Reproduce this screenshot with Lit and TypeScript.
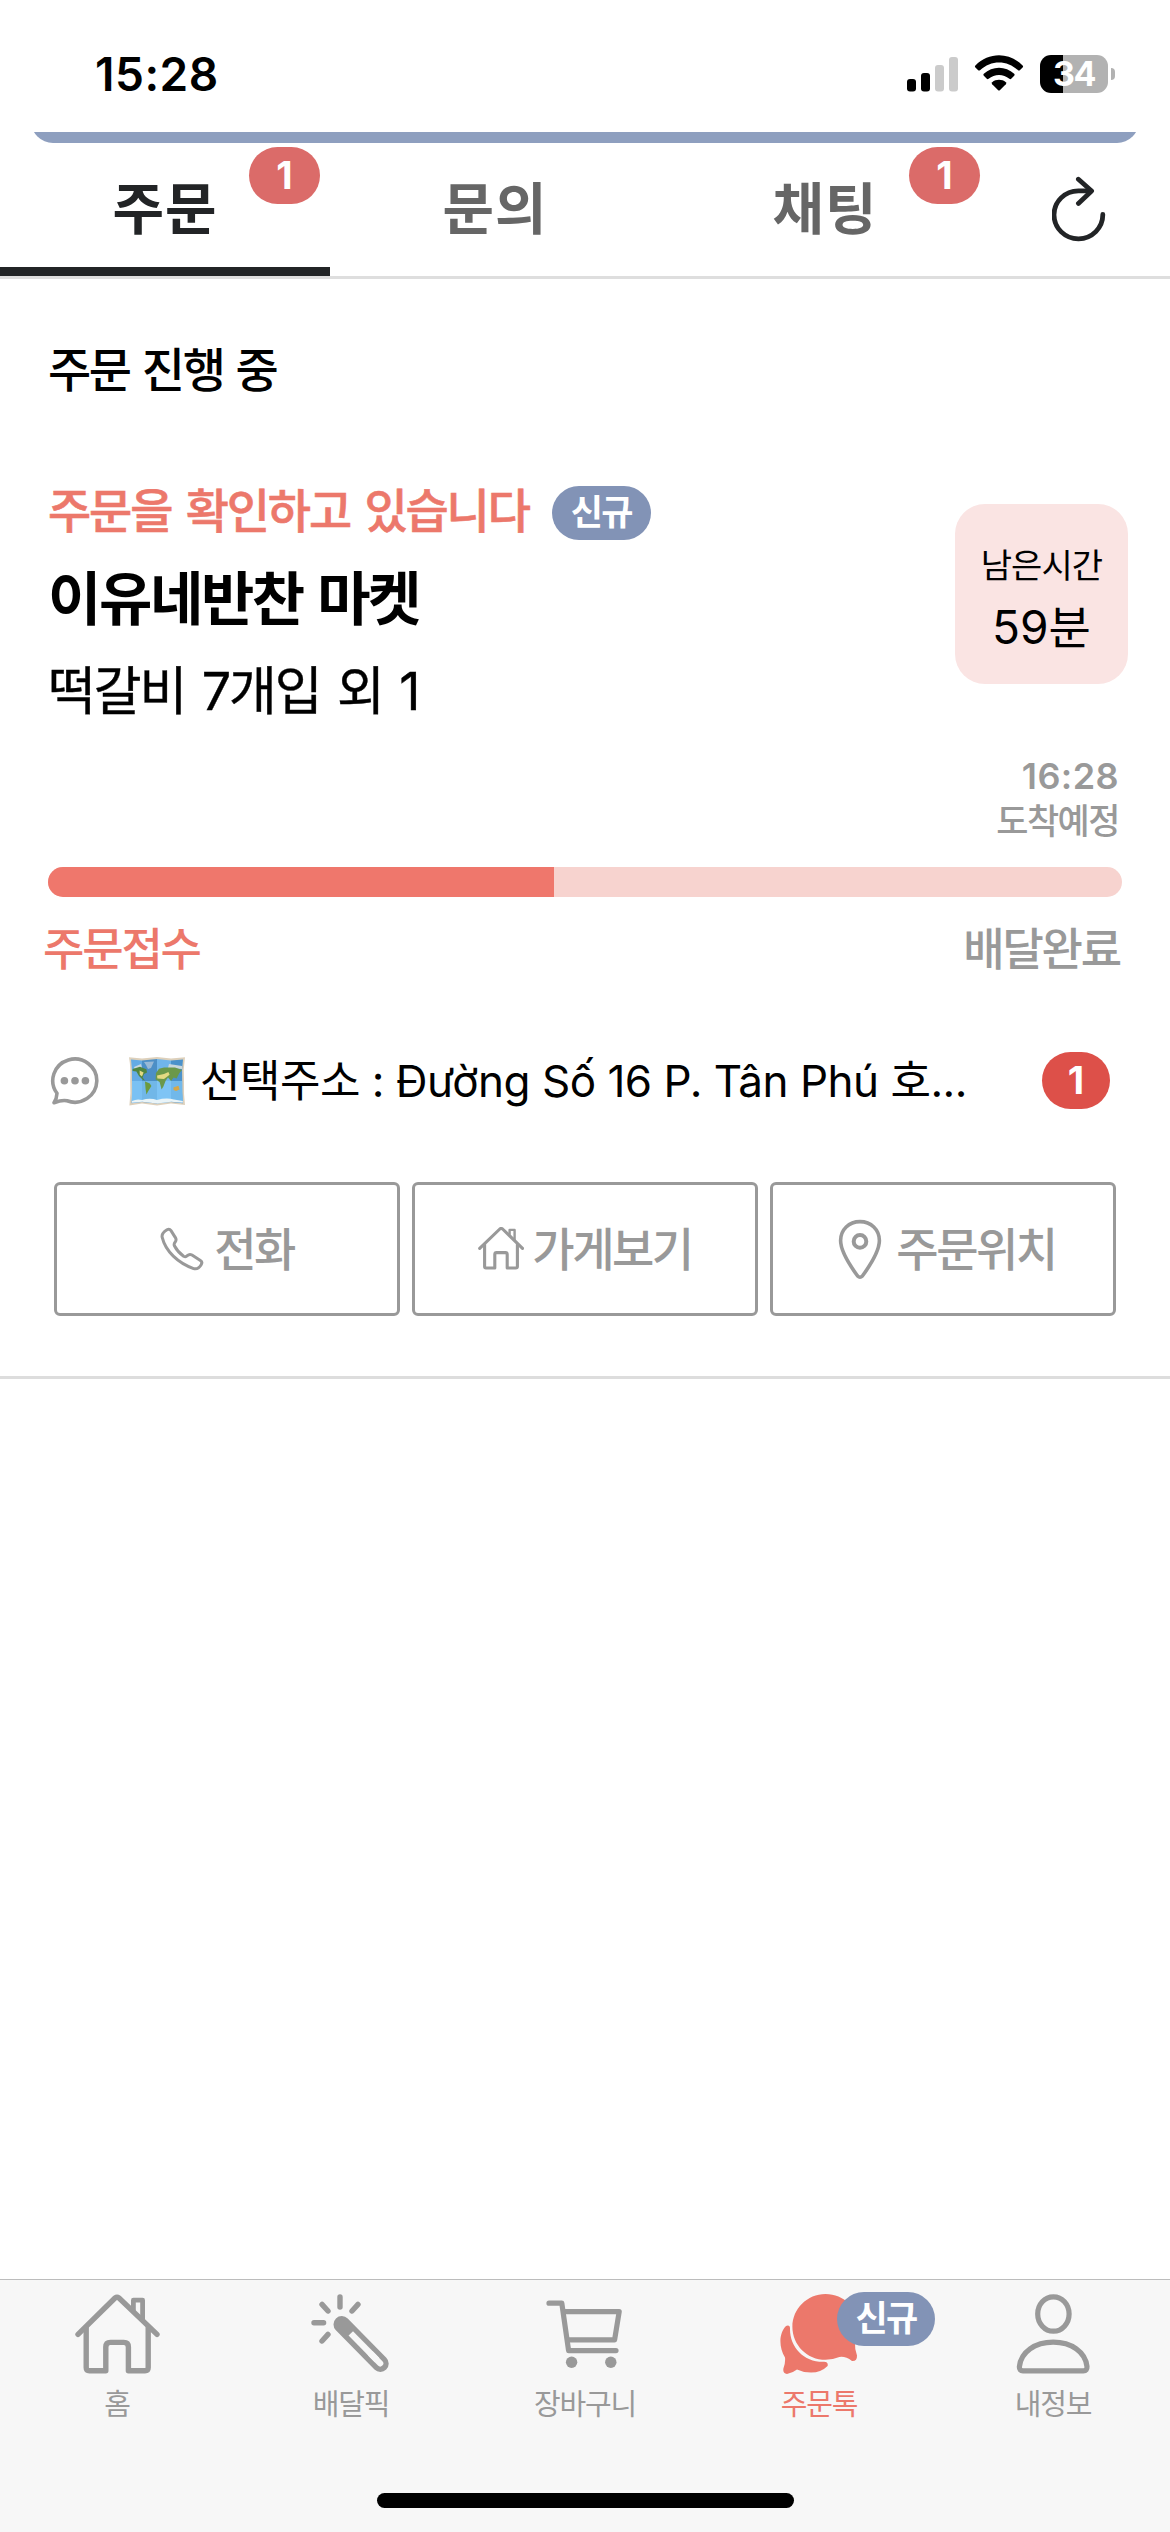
import { LitElement, html, css, svg, nothing } from "lit";
import { customElement, property } from "lit/decorators.js";
import { classMap } from "lit/directives/class-map.js";

const icons: Record<string, { w: number; h: number; body: unknown }> = {
  refresh: {
    w: 54, h: 66,
    body: svg`<g fill="none" stroke="currentColor" stroke-width="4.8" stroke-linecap="round" stroke-linejoin="round">
      <path d="M50.8 38.5 A24.4 24 0 1 1 26.4 14.8 H39"/><path d="M26.4 3.2 L39.6 15 L26.4 27.4"/></g>`,
  },
  chat: {
    w: 50, h: 50,
    body: svg`<path fill="none" stroke="currentColor" stroke-width="3.6" stroke-linejoin="round"
        d="M7 37.3 A22 21.6 0 1 1 17 44.8 Q12.5 43.6 4 46.7 Q6.8 42.5 7 37.3 Z"/>
      <g fill="currentColor"><circle cx="14.4" cy="24.8" r="3.8"/><circle cx="25" cy="24.8" r="3.8"/><circle cx="35.4" cy="24.8" r="3.8"/></g>`,
  },
  map: {
    w: 57, h: 50,
    body: svg`<path fill="#ddd0bb" d="M1 1.2 L14 2.6 L29 1 L43 2.6 L57 1.2 Q55 13 56 25 Q55.6 38 57 49 L43 47.6 L29 49.6 L14 47.6 L1.4 49.4 Q3 37 2.2 25 Q3 12 1 1.2 Z"/>
      <path fill="#64abe4" d="M3 3.4 L14 4.6 V46 L3.6 47.2 Q4.6 36 4 25 Q4.4 13 3 3.4 Z"/>
      <path fill="#4c8fc6" d="M14 4.6 L29 3 V47.6 L14 46 Z"/>
      <path fill="#70b5ea" d="M29 3 L43 4.6 V46 L29 47.6 Z"/>
      <path fill="#4b92cb" d="M43 4.6 L55 3.4 Q53.6 13 54.2 25 Q54 36 55 47.2 L43 46 Z"/>
      <path fill="#86cdfa" opacity=".65" d="M4 25 H54.2 Q54 36 55 46 L43 45 L29 46.6 L14 45 L3.7 46 Z"/>
      <path fill="#98b9d6" d="M16 6 L26 5.4 L23 12 L20 13 L18 9 Z"/>
      <path fill="#c9d7dc" d="M6 11 L13 8 L14 12 L7 14 Z M41 8 L54 10 V13 L40 12 Z"/>
      <path fill="#50853f" d="M4.6 13 L12 10.8 L18.4 13.2 L19 16.4 L16 18 L14.6 21.6 L17 24.6 L15 24 L11 20 L8.4 15.6 L4.6 15 Z"/>
      <path fill="#6c9a3d" d="M17 25.4 L21.8 27.4 L23.4 30 L20 35.6 L18.4 38.4 L17.6 33 Z"/>
      <path fill="#6b984a" d="M28 17 L31 12.8 L36 11.6 L47 11.4 L54 14 L51.4 17 L48.6 22.4 L45.6 21.4 L43 25 L40 21.4 L37.6 24.8 L35.4 30.6 L33.6 33.6 L31.6 26 L27.6 23.4 Z"/>
      <path fill="#e3d982" d="M11.6 14.6 L15.6 16.6 L14 20.6 L11.8 18.8 Z M29 19.6 L36 18 L40.4 16 L41.6 18.8 L36 23 L29.4 22.6 Z"/>
      <path fill="#d6a748" d="M45.4 31.6 L50.4 29.8 L51.6 33.4 L48 35 L45.6 34 Z"/>
      <path fill="#e9f4f8" d="M4 45 Q9 42.4 14 44 Q22 41.6 29 44 Q38 41.4 46 43.4 L54.8 45 L54.8 46.8 L43 45.8 L29 47.4 L14 45.8 L4 46.8 Z"/>`,
  },
  phone: {
    w: 44, h: 44,
    body: svg`<path fill="none" stroke="currentColor" stroke-width="3" stroke-linejoin="round"
      d="M7 2.8 Q9.4 1.4 11 3.6 L15.4 10.6 Q16.8 13 15.2 15 Q13.6 17 14.4 18.8 Q17.6 25 23.6 29.2 Q25.8 30.4 27.4 28.6 Q29.4 26.6 32 28 L40.4 33.4 Q42.8 35 41.2 37.6 Q38.6 42.6 33.6 41.6 C18 36 5.6 24.4 2.2 10.4 Q1.2 6.4 7 2.8 Z"/>`,
  },
  shop: {
    w: 46, h: 44,
    body: svg`<g fill="none" stroke="currentColor" stroke-width="3.1" stroke-linecap="round" stroke-linejoin="round">
      <path d="M1.7 21.4 L21.8 2 Q23.2 1 24.6 2 L44.5 21.4"/>
      <path d="M6.6 17.6 V39.6 Q6.6 41 8 41 H16.8 V27.4 Q16.8 25.6 18.6 25.6 H27.4 Q29.2 25.6 29.2 27.4 V41 H37.6 Q39.4 41 39.4 39.6 V17.6"/>
      <path stroke-width="2.4" d="M31.6 7 V2.9 H36.6 V12.4"/></g>`,
  },
  pin: {
    w: 44, h: 60,
    body: svg`<g fill="none" stroke="currentColor" stroke-linejoin="round">
      <path stroke-width="3.6" d="M22 2.6 C33 2.6 41.4 10.6 41.4 21.6 C41.4 33 31 48 24.4 57 Q22 59.4 19.6 57 C13 48 2.6 33 2.6 21.6 C2.6 10.6 11 2.6 22 2.6 Z"/>
      <circle stroke-width="4" cx="22" cy="22.4" r="6.3"/></g>`,
  },
  home: {
    w: 87, h: 82,
    body: svg`<g fill="none" stroke="currentColor" stroke-width="5.4" stroke-linecap="round" stroke-linejoin="round">
      <path d="M4 41.4 L41 5 Q43 3.6 45 5 L83 41.4"/>
      <path d="M12.2 35 V74.6 Q12.2 77.8 15.4 77.8 H31.8 V54 Q31.8 49.4 36.4 49.4 H49.8 Q54.4 49.4 54.4 54 V77.8 H71 Q74.2 77.8 74.2 74.6 V35"/>
      <path stroke-width="4.8" d="M59.4 17 V7.2 H68.6 V27"/></g>`,
  },
  wand: {
    w: 80, h: 82,
    body: svg`<g fill="none" stroke="currentColor" stroke-linecap="round">
      <path stroke-width="5.4" d="M29 4 V14 M11 11.4 L17 18 M47 11.4 L41 18 M3 29.7 H12.6 M17 41.4 L11 48"/>
      <path stroke-width="16.6" d="M30.8 31.4 L69.4 70.6"/></g>
      <path fill="none" stroke="#f7f7f7" stroke-width="6.2" d="M39.8 40.4 L66 67"/>
      <path fill="none" stroke="#f7f7f7" stroke-width="6.2" stroke-linecap="round" d="M60 61 L69.2 70.4"/>`,
  },
  cart: {
    w: 80, h: 82,
    body: svg`<g transform="translate(0.6 6)"><g fill="none" stroke="currentColor" stroke-width="5.2" stroke-linecap="round" stroke-linejoin="round">
      <path d="M3.4 4.2 H16.2 L23 51.6 H70.4"/><path d="M18 12.6 H73.6 L69 40.8 H22"/></g>
      <g fill="currentColor"><circle cx="26" cy="63.2" r="5.7"/><circle cx="65.2" cy="63.2" r="5.7"/></g></g>`,
  },
  talk: {
    w: 80, h: 82,
    body: svg`<g fill="currentColor">
      <path d="M46.5 1 C65 1 79.6 15.8 79.6 33.6 C79.6 40.6 78.4 45 76 50 Q75.6 56.6 78 62.4 Q78.2 68.4 73 68 Q66.4 63 60.4 64 Q53.6 66.8 46.5 66.8 C28.2 66.8 13.4 52 13.4 33.9 C13.4 15.8 28.2 1 46.5 1 Z"/>
      <path d="M7 33 Q11 31.6 11 35.4 C10.6 54 25 69.4 45 68.8 Q49.6 69 48.6 73 Q42 79.6 32 79.6 Q24.6 79.6 18 76.4 Q13.4 80 8 81 Q3.6 80.6 4.4 75.6 Q6.6 70 6 64.4 C0 55 -.6 40.6 7 33 Z"/></g>`,
  },
  person: {
    w: 77, h: 82,
    body: svg`<g fill="none" stroke="currentColor" stroke-width="5.2" stroke-linejoin="round">
      <ellipse cx="38.4" cy="21" rx="15.7" ry="17.2"/>
      <path d="M8 77.8 Q4.2 77.8 4.4 73.6 C6 59 20 49.2 38.2 49.2 C56.4 49.2 70.4 59 72 73.6 Q72.2 77.8 68.4 77.8 Z"/></g>`,
  },
  signal: {
    w: 76, h: 36,
    body: svg`<rect y="22" width="9" height="12.4" rx="3"/><rect x="14" y="16" width="9" height="18.4" rx="3"/>
      <g fill="#cbcbcb"><rect x="28" y="8" width="9" height="26.4" rx="3"/><rect x="42" y="0" width="9" height="34.4" rx="3"/></g>`,
  },
  wifi: {
    w: 50, h: 37,
    body: svg`<path d="M1.4 10.4 C14.8 -3 35.2 -3 48.6 10.4 Q49.6 11.4 48.6 12.4 L45.8 15.2 Q45 16 44 15.2 C33 4.8 17 4.8 6 15.2 Q5 16 4.2 15.2 L1.4 12.4 Q.4 11.4 1.4 10.4 Z"/>
      <path d="M9.8 18.8 C18.4 10.8 31.6 10.8 40.2 18.8 Q41.2 19.8 40.2 20.8 L37.2 23.8 Q36.4 24.6 35.4 23.8 C29.4 18.6 20.6 18.6 14.6 23.8 Q13.6 24.6 12.8 23.8 L9.8 20.8 Q8.8 19.8 9.8 18.8 Z"/>
      <path d="M18.2 27.2 C22 24 28 24 31.8 27.2 Q32.8 28.2 31.8 29.2 L25.8 35.2 Q25 36 24.2 35.2 L18.2 29.2 Q17.2 28.2 18.2 27.2 Z"/>`,
  },
};

@customElement("ui-icon")
export class UiIcon extends LitElement {
  @property() name = "";
  static styles = css`
    :host { display: block; flex: none; }
    svg { display: block; }
  `;
  render() {
    const i = icons[this.name];
    return i
      ? html`<svg width=${i.w} height=${i.h} viewBox="0 0 ${i.w} ${i.h}" aria-hidden="true">${i.body}</svg>`
      : nothing;
  }
}

const font = css`
  :host { font-family: Inter, "Noto Sans CJK KR", "Liberation Sans", sans-serif; }
`;

@customElement("status-bar")
export class StatusBar extends LitElement {
  static styles = [font, css`
    :host { display: flex; height: 132px; box-sizing: border-box; padding: 51px 55px 0 95px; justify-content: space-between; color: #000; }
    .time { font-size: 46px; line-height: 46px; font-weight: 600; letter-spacing: 0.5px; }
    .right { display: flex; align-items: flex-start; padding-top: 4px; }
    .signal { margin: 2px 15px 0 0; width: 52px; overflow: hidden; }
    .wifi { margin-right: 16px; }
    .battery { width: 68px; height: 38px; border-radius: 11px; background: linear-gradient(90deg, #000 34%, #b2b2b2 34%); color: #fff;
      font-size: 34px; line-height: 38px; font-weight: 700; text-align: center; letter-spacing: -1.5px; }
    .nub { width: 4px; height: 12px; margin: 13px 0 0 3px; border-radius: 0 4px 4px 0; background: #b2b2b2; }
  `];
  render() {
    return html`<div class="time">15:28</div>
      <div class="right">
        <ui-icon class="signal" name="signal"></ui-icon>
        <ui-icon class="wifi" name="wifi"></ui-icon>
        <div class="battery">34</div><div class="nub"></div>
      </div>`;
  }
}

const tabs = [
  { label: "주문", count: 1, active: true },
  { label: "문의", count: 0, active: false },
  { label: "채팅", count: 1, active: false },
];

@customElement("top-tabs")
export class TopTabs extends LitElement {
  static styles = [font, css`
    :host { display: block; border-bottom: 3px solid #dedede; }
    .peek { height: 11px; margin: 0 31px; overflow: hidden; display: flex; align-items: flex-end; }
    .card { flex: 1; height: 60px; border-radius: 22px; background: #8e9fbf; }
    .row { display: grid; grid-template-columns: repeat(3, 330px) 1fr; height: 133px; }
    .tab { position: relative; box-sizing: border-box; padding-top: 33px; border-bottom: 9px solid transparent; text-align: center;
      font-size: 56px; line-height: 66px; font-weight: 700; letter-spacing: 1px; color: #666; }
    .tab.active { color: #222426; border-color: #222426; }
    .badge { position: absolute; top: 4px; left: 249px; width: 71px; height: 57px; border-radius: 29px; background: #db6b69; color: #fff;
      font-size: 38px; line-height: 56px; letter-spacing: 0; }
    .refresh { padding: 33px 0 0 62px; color: #222426; }
  `];
  render() {
    return html`<div class="peek"><div class="card"></div></div>
      <div class="row">
        ${tabs.map(t => html`<div class=${classMap({ tab: true, active: t.active })}>${t.label}${t.count ? html`<span class="badge">${t.count}</span>` : nothing}</div>`)}
        <div class="refresh"><ui-icon name="refresh"></ui-icon></div>
      </div>`;
  }
}

const actions = [
  { icon: "phone", label: "전화", gap: 10, inset: 0 },
  { icon: "shop", label: "가게보기", gap: 8, inset: 0 },
  { icon: "pin", label: "주문위치", gap: 14, inset: 8 },
];

@customElement("order-card")
export class OrderCard extends LitElement {
  @property({ type: Number }) progress = 47.1;
  static styles = [font, css`
    :host { display: block; border-bottom: 3px solid #dddddd; padding: 61px 48px 60px; color: #000; white-space: nowrap; }
    .title { font-size: 47px; line-height: 60px; font-weight: 500; letter-spacing: -2.4px; word-spacing: 2px; }
    .summary { display: flex; justify-content: space-between; margin: 86px -6px 0 0; }
    .state { display: flex; align-items: center; height: 54px; }
    .msg { color: #ec786b; font-size: 47px; line-height: 54px; font-weight: 500; -webkit-text-stroke: 0.6px #ec786b; letter-spacing: -2.15px; word-spacing: 4px; padding-bottom: 4px; }
    .pill { width: 99px; height: 54px; margin-left: 23px; border-radius: 27px; background: #8293b6; color: #fff; text-align: center;
      font-size: 35px; line-height: 52px; font-weight: 700; letter-spacing: -1.8px; }
    .store { margin-top: 19px; font-size: 58px; line-height: 80px; font-weight: 700; letter-spacing: -2.4px; word-spacing: 3px; }
    .item { margin-top: 18px; font-size: 52px; line-height: 70px; font-weight: 400; -webkit-text-stroke: 0.4px #000; letter-spacing: -2.1px; word-spacing: 4px; }
    .left { box-sizing: border-box; width: 173px; height: 180px; margin-top: 18px; padding-top: 37px; border-radius: 30px; background: #fae4e3; text-align: center; }
    .left-label { font-size: 34px; line-height: 50px; letter-spacing: -0.9px; }
    .left-time { margin-top: 9px; font-size: 46px; line-height: 54px; }
    .eta { margin-top: 27px; text-align: right; color: #999; padding-right: 3px; }
    .eta-time { font-size: 36px; line-height: 44px; font-weight: 600; letter-spacing: 0.4px; }
    .eta-label { font-size: 35px; line-height: 46px; font-weight: 500; letter-spacing: -1.5px; }
    .bar { height: 30px; margin-top: 23px; border-radius: 15px; background: #f7d3cf; overflow: hidden; }
    .fill { height: 30px; background: #ef776c; }
    .ends { display: flex; justify-content: space-between; margin: 28px 2px 0 -5px; font-size: 45px; line-height: 50px; font-weight: 500; letter-spacing: -2.2px; color: #999; }
    .now { color: #ec786b; }
    .notice { display: flex; align-items: center; height: 57px; margin-top: 77px; padding: 0 12px 0 2px; }
    .chat { color: #999; margin-right: 28px; }
    .address { margin-left: 15px; font-size: 44px; line-height: 57px; letter-spacing: -0.5px; flex: 1; padding-top: 2px; }
    .count { width: 68px; height: 57px; border-radius: 29px; background: #dd5049; color: #fff; text-align: center; font-size: 38px; line-height: 56px; font-weight: 700; }
    .actions { display: grid; grid-template-columns: repeat(3, 1fr); gap: 12px; margin: 73px 6px 0; }
    .action { display: flex; align-items: center; justify-content: center; box-sizing: border-box; height: 134px; border: 3px solid #999; border-radius: 6px;
      color: #999; font-size: 46px; line-height: 60px; font-weight: 500; letter-spacing: -2.5px; }
  `];
  render() {
    return html`
      <div class="title">주문 진행 중</div>
      <div class="summary">
        <div>
          <div class="state"><span class="msg">주문을 확인하고 있습니다</span><span class="pill">신규</span></div>
          <div class="store">이유네반찬 마켓</div>
          <div class="item">떡갈비 7개입 외 1</div>
        </div>
        <div class="left"><div class="left-label">남은시간</div><div class="left-time">59분</div></div>
      </div>
      <div class="eta"><div class="eta-time">16:28</div><div class="eta-label">도착예정</div></div>
      <div class="bar"><div class="fill" style="width:${this.progress}%"></div></div>
      <div class="ends"><span class="now">주문접수</span><span>배달완료</span></div>
      <div class="notice">
        <ui-icon class="chat" name="chat"></ui-icon><ui-icon name="map"></ui-icon>
        <span class="address">선택주소 : Đường Số 16 P. Tân Phú 호...</span>
        <span class="count">1</span>
      </div>
      <div class="actions">
        ${actions.map(a => html`<div class="action" style="gap:${a.gap}px;padding-left:${a.inset}px"><ui-icon name=${a.icon}></ui-icon><span>${a.label}</span></div>`)}
      </div>`;
  }
}

const nav = [
  { icon: "home", label: "홈", active: false, pill: "" },
  { icon: "wand", label: "배달픽", active: false, pill: "" },
  { icon: "cart", label: "장바구니", active: false, pill: "" },
  { icon: "talk", label: "주문톡", active: true, pill: "신규" },
  { icon: "person", label: "내정보", active: false, pill: "" },
];

@customElement("bottom-nav")
export class BottomNav extends LitElement {
  static styles = [font, css`
    :host { display: flex; flex-direction: column; align-items: center; height: 253px; box-sizing: border-box; border-top: 1px solid #bcbcbc; background: #f7f7f7; }
    .items { display: grid; grid-template-columns: repeat(5, 1fr); align-self: stretch; padding-top: 13px; }
    .item { position: relative; display: flex; flex-direction: column; align-items: center; color: #999; font-size: 29px; line-height: 34px; letter-spacing: -1.2px; }
    .item.active { color: #ec786b; }
    .label { margin-top: 13px; }
    .pill { position: absolute; top: -1px; left: 135px; width: 98px; height: 54px; border-radius: 27px; background: #8293b6; color: #fff; text-align: center;
      font-size: 35px; line-height: 52px; font-weight: 700; letter-spacing: -1.8px; }
    .grip { width: 417px; height: 15px; margin-top: 71px; border-radius: 8px; background: #000; }
  `];
  render() {
    return html`<div class="items">
        ${nav.map(n => html`<div class=${classMap({ item: true, active: n.active })}>
          <ui-icon name=${n.icon}></ui-icon><span class="label">${n.label}</span>
          ${n.pill ? html`<span class="pill">${n.pill}</span>` : nothing}
        </div>`)}
      </div>
      <div class="grip"></div>`;
  }
}

@customElement("app-root")
export class AppRoot extends LitElement {
  static styles = css`
    :host { display: flex; flex-direction: column; width: 1170px; height: 2532px; background: #fff; overflow: hidden; }
    main { flex: 1; }
  `;
  render() {
    return html`<status-bar></status-bar><top-tabs></top-tabs>
      <main><order-card></order-card></main>
      <bottom-nav></bottom-nav>`;
  }
}
